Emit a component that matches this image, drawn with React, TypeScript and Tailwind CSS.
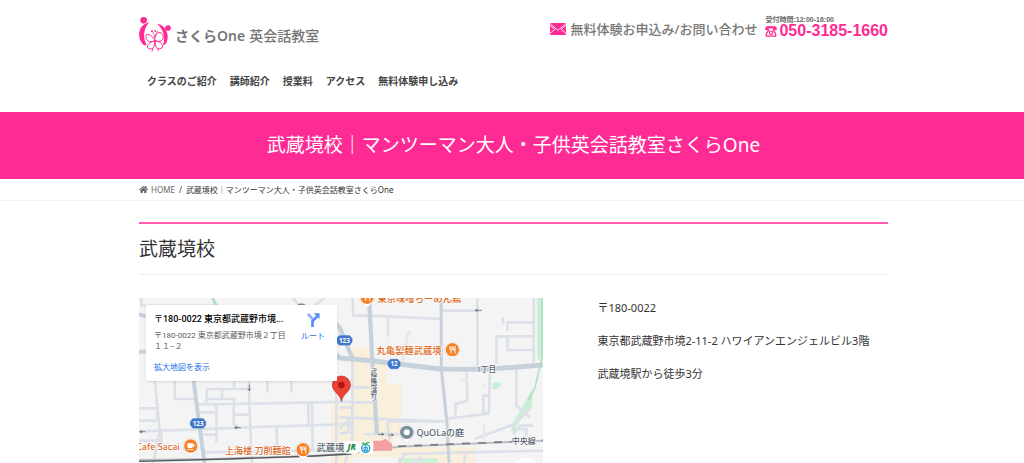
import { FaHome } from "react-icons/fa";

const navItems = [
  { label: "クラスのご紹介", href: "#class" },
  { label: "講師紹介", href: "#teacher" },
  { label: "授業料", href: "#price" },
  { label: "アクセス", href: "#access" },
  { label: "無料体験申し込み", href: "#trial" },
];

const address = ["〒180-0022", "東京都武蔵野市境2-11-2 ハワイアンエンジェルビル3階", "武蔵境駅から徒歩3分"];

function LogoMark() {
  return (
    <svg viewBox="24 33 99 108" className="h-9 w-[33px] shrink-0" fill="none" aria-hidden="true">
      <circle cx="38" cy="46" r="10" fill="#ff2b95" />
      <circle cx="111" cy="69" r="8.5" fill="#ff2b95" />
      <path d="M55 52C22 58 15 98 37 119C42 123 47 122 46 117C35 100 37 70 55 52Z" fill="#ff2b95" />
      <path d="M78 56C103 59 117 88 107 112C104 119 98 122 96 119C104 97 98 73 78 56Z" fill="#ff2b95" />
      <g stroke="#ff2b95" strokeWidth="3" strokeLinejoin="round" strokeLinecap="round">
        <path d="M72 107C66 96 58 86 46 89C42 99 48 110 60 110Q67 111 72 107Z" />
        <path d="M72 107C70 96 74 84 87 82C99 88 100 102 90 108Q80 112 72 107Z" />
        <path d="M72 107C62 110 49 115 49 127C54 134 66 133 69 125Q72 116 72 107Z" />
        <path d="M72 107C82 109 97 114 95 126C90 134 78 132 75 125Q72 116 72 107Z" />
        <path d="M66 131L63 138M79 131L82 137" />
        <path d="M71 97C70 88 68 84 64 80M74 95C75 86 77 83 80 79" strokeWidth="2.4" />
      </g>
      <circle cx="63" cy="79" r="3" fill="#ff2b95" />
      <circle cx="73" cy="78" r="3" fill="#ff2b95" />
    </svg>
  );
}

function MailIcon() {
  return (
    <svg viewBox="0 0 48 36" className="h-3 w-4 shrink-0" aria-hidden="true">
      <rect width="48" height="36" rx="2" fill="#ff2b95" />
      <path d="M0 7L15 19L0 31M48 7L33 19L48 31M0 2L24 22L48 2" fill="none" stroke="#fff" strokeWidth="2.5" />
    </svg>
  );
}

function PhoneIcon() {
  return (
    <svg viewBox="0 0 36 33" className="h-[11px] w-3 shrink-0" fill="none" stroke="#ff2b95" aria-hidden="true">
      <path d="M1 12V7Q2 1 9 1H27Q34 1 35 7V12H25V7H11V12Z" fill="#ff2b95" strokeWidth="1" />
      <path d="M12 11L4 24V30.5H32V24L24 11" strokeWidth="4" />
      <circle cx="18" cy="20" r="5" strokeWidth="3.5" />
    </svg>
  );
}

function Header() {
  return (
    <header className="pl-[3px]">
      <div className="mx-auto max-w-[749px] pt-4 pb-[21px]">
        <div className="flex items-start justify-between">
          <a href="#home" className="flex items-center gap-[3px] text-[#777]">
            <LogoMark />
            <span className="flex items-center gap-1 pt-1 leading-5">
              <span className="text-[14px] font-semibold">さくらOne</span>
              <span className="text-[14px] font-medium">英会話教室</span>
            </span>
          </a>
          <div className="flex items-start gap-2">
            <a href="#contact" className="flex items-center gap-1 pt-[3px] text-[13px] leading-5 font-medium text-[#777]">
              <MailIcon />
              無料体験お申込み/お問い合わせ
            </a>
            <a href="tel:050-3185-1660" className="flex flex-col font-['Liberation_Sans','Noto_Sans_CJK_JP',sans-serif] font-bold">
              <span className="text-[7px] leading-[7px] text-[#666]">受付時間:12:00-16:00</span>
              <span className="flex items-center gap-[2px] text-[16px] leading-4 text-[#ff2b95]">
                <PhoneIcon />
                050-3185-1660
              </span>
            </a>
          </div>
        </div>
        <nav className="mt-[19px] flex gap-[13px] px-2 text-[10px] leading-5 font-bold text-[#444]">
          {navItems.map(({ label, href }) => (
            <a key={href} href={href}>
              {label}
            </a>
          ))}
        </nav>
      </div>
    </header>
  );
}

function Pin({ x, y, kind }: { x: number; y: number; kind: "food" | "cafe" | "place" }) {
  const color = kind === "place" ? "#78909c" : "#f8822a";
  return (
    <g transform={`translate(${x} ${y})`}>
      <path d="M0 32L-15 17A23 23 0 1 1 15 17Z" fill="#fff" stroke="#c9cdd2" strokeWidth="1.5" />
      <circle r="20" fill={color} />
      {kind === "place" && <circle r="9" fill="#fff" />}
      {kind === "food" && (
        <path d="M-8 -10V-3Q-8 1 -4 1V11M-4 -10V0M0 -10V-3Q0 1 -4 1M8 11V-10Q3 -8 3 1H8" fill="none" stroke="#fff" strokeWidth="2.8" />
      )}
      {kind === "cafe" && (
        <path d="M-10 -8H6V2Q6 6 2 6H-6Q-10 6 -10 2ZM-10 9H8V11H-10ZM6 -6H11V2H6" fill="#fff" />
      )}
    </g>
  );
}

function Shield({ x, y, label }: { x: number; y: number; label: string }) {
  const w = label.length > 2 ? 23 : 18;
  return (
    <g transform={`translate(${x} ${y})`}>
      <path d={`M${-w + 7} -14H${w - 7}L${w} -5V5L${w - 7} 14H${-w + 7}L${-w} 5V-5Z`} fill="#3f78c9" stroke="#3f78c9" strokeWidth="2" strokeLinejoin="round" />
      <text y="7" textAnchor="middle" fontSize="19" fontWeight="700" fill="#fff">
        {label}
      </text>
    </g>
  );
}

function MapDrawing() {
  return (
    <svg viewBox="12 22 1215 498" preserveAspectRatio="xMidYMid slice" className="block h-full w-full bg-[#f4f4f5]" role="img" aria-label="武蔵境校の地図">
      {/* areas */}
      <path d="M655 165L712 175L722 210H755V280H800V410L770 470H1020V520H850V500H600V345H652Z" fill="#f9efdb" />
      <path d="M590 340H655V520H590Z" fill="#f9efdb" />
      <path d="M1207 22H1227V200L1218 215L1207 200Z" fill="#c9f0d6" />
      <path d="M1195 290L1192 350L1145 405L1130 430V402L1165 345Z" fill="#c9f0d6" />
      <path d="M1075 275H1097V290H1088V295H1072Z" fill="#c3efd3" />
      <path d="M790 502H910V520H790Z" fill="#cdf0d8" />
      {/* small streets */}
      <g fill="none" stroke="#dce1e9" strokeWidth="8" strokeLinejoin="round">
        <path d="M60 270L75 420L55 520M12 353H66L70 390M12 390H72" />
        <path d="M120 270V325H185M217 292L214 342M217 295H345M262 322V292M214 325H298V342M298 268V292M342 270L346 400L352 520M398 270V306M470 270V306" />
        <path d="M185 342L655 333M245 342V455M190 365H245M297 342V400L310 410M297 372H344M520 334L522 410M532 334L534 480M605 270V520M425 408L428 480" />
        <path d="M12 422L345 410L650 400M12 450H80M80 422V470M200 432H245M200 485L640 478" />
        <path d="M20 22V45H250M475 22L490 40M570 22L540 45" />
        <path d="M653 22L656 75H705L920 85M760 85V138M653 205V440L630 520M653 290H705M653 335H725M615 380L918 392M757 392L765 460M757 392H930M735 430H765M930 385L1065 368M1065 250L1063 365L1046 370V315H1060M995 235L998 330L962 340V375" />
        <path d="M920 60H1030M1028 22V230M1197 22V222M1118 95H1197M1118 95V120M1085 137H1197M1118 137V178H1197M1085 137V220M1105 80V100M1145 235V345L1185 380M1135 430L1155 405H1195M1140 430V415H1175V440M1020 445L1140 400L1185 355" />
        <path d="M615 430L635 425H655L640 385V430M615 350H650M615 415L640 390M690 430H815M800 490L1227 480M990 492V520M810 490L790 520M860 500L830 520" />
        <path d="M1048 400V450M820 130L828 122M803 218L820 128M1046 280V290M975 267H1000" stroke="#e6e8ec" />
      </g>
      {/* main roads */}
      <g fill="none" stroke="#c7d1dc" strokeWidth="15" strokeLinejoin="round">
        <path d="M12 183H33M12 70L33 78M176 265L190 375L210 520" strokeWidth="12" />
        <path d="M605 192L615 202L710 210L915 235L1055 236L1227 223" />
        <path d="M570 70L615 110L655 208M703 22L713 215L727 430" strokeWidth="13" />
        <path d="M919 22L920 235L937 400L943 520" strokeWidth="9" />
      </g>
      <path d="M233 22L245 45" stroke="#a8dfbe" strokeWidth="8" />
      <path d="M1222 22V200L1200 295L1180 330" fill="none" stroke="#a8dfbe" strokeWidth="4" />
      {/* railway */}
      <path d="M12 508L240 505L540 495L650 488L790 468L1227 450" fill="none" stroke="#b9bdc4" strokeWidth="6" />
      <path d="M12 512L280 505L540 496L650 490" fill="none" stroke="#55585c" strokeWidth="4" />
      <path d="M790 467L1227 449" fill="none" stroke="#777b80" strokeWidth="5" strokeDasharray="24 24" />
      <path d="M716 450H740L752 444L772 460V480H716Z" fill="#f4a0a0" />
      {/* one-way arrows */}
      <g stroke="#666a70" strokeWidth="2.5" fill="none">
        <path d="M344 282V300M340 294L344 300L348 294M300 411H318M307 407L300 411L307 415M15 423H32M22 419L15 423L22 427M1022 59H1042M1029 55L1022 59L1029 63M730 431H747M741 427L747 431L741 435M760 433H776M770 429L776 433L770 437" />
      </g>
      {/* labels */}
      <g stroke="#fff" strokeWidth="4" paintOrder="stroke" strokeLinejoin="round" fontSize="27" fontWeight="500">
        <g fill="#dc6a1e">
          <text x="728" y="34" fontSize="28">東京味噌らーめん鶏</text>
          <text x="725" y="190" fontSize="28">丸亀製麺武蔵境</text>
          <text x="4" y="479">Cafe Sacai</text>
          <text x="271" y="489" fontSize="27">上海楼 刀削麺館</text>
        </g>
        <g fill="#53606c">
          <text x="845" y="437">QuOLaの庭</text>
          <text x="545" y="480" fontSize="28">武蔵境</text>
          <text x="1025" y="244" fontSize="23">1丁目</text>
          <text x="1131" y="461" fontSize="24">中央線</text>
          <text x="716" y="232" fontSize="20" style={{ writingMode: "vertical-rl" }}>
            武蔵境通り
          </text>
        </g>
      </g>
      <Pin x={697} y={20} kind="food" />
      <Pin x={953} y={177} kind="food" />
      <Pin x={168} y={466} kind="cafe" />
      <Pin x={505} y={477} kind="food" />
      <Pin x={816} y={425} kind="place" />
      <path d="M484 46A20 20 0 0 1 516 46Z" fill="#78909c" />
      <Shield x={190} y={398} label="123" />
      <Shield x={629} y={149} label="123" />
      <Shield x={778} y={220} label="12" />
      {/* station badges */}
      <rect x="630" y="451" width="42" height="38" rx="9" fill="#fff" />
      <rect x="673" y="451" width="42" height="38" rx="9" fill="#fff" />
      <text x="651" y="479" textAnchor="middle" fontSize="25" fontWeight="800" fontStyle="italic" fill="#168a45">
        JR
      </text>
      <g fill="none" stroke="#2398d5" strokeWidth="4">
        <circle cx="693" cy="473" r="12" />
        <path d="M693 464V482M688 470H698V480H688Z" strokeWidth="3" />
        <path d="M681 459Q690 455 693 463Q696 452 705 456" stroke="#4db35e" />
      </g>
      {/* school marker */}
      <path d="M620 332C616 309 593 304 593 283A27 27 0 0 1 647 283C647 304 624 309 620 332Z" fill="#ea4335" stroke="#c5221f" strokeWidth="2" />
      <circle cx="620" cy="283" r="10" fill="#b31412" />
      <circle cx="1172" cy="540" r="38" fill="#fff" />
    </svg>
  );
}

function MapCard() {
  return (
    <div className="absolute top-[7px] left-[7px] flex h-[76px] w-[191px] justify-between rounded-[1px] bg-white pt-2 pr-3 pl-2 font-['Roboto','Noto_Sans_CJK_JP',sans-serif] text-[8px] leading-[11px] shadow">
      <div>
        <p className="text-[9px] leading-3 font-medium text-black">〒180-0022 東京都武蔵野市境...</p>
        <p className="mt-[5px] text-[#5b5b5b]">
          〒180-0022 東京都武蔵野市境２丁目
          <br />
          １１−２
        </p>
        <a href="#map" className="mt-[10px] block text-[#1a73e8]">
          拡大地図を表示
        </a>
      </div>
      <a href="#route" className="flex flex-col items-center gap-1 text-[#1a73e8]">
        <svg viewBox="0 0 38 42" className="h-[14px] w-[13px]" fill="none" aria-hidden="true">
          <path d="M2 3L16 18" stroke="#8ab4f8" strokeWidth="8" />
          <path d="M16 42V24L30 10" stroke="#4f8df6" strokeWidth="8" />
          <path d="M20 1H37V18Z" fill="#4f8df6" />
        </svg>
        ルート
      </a>
    </div>
  );
}

export default function App() {
  return (
    <div className="overflow-hidden bg-white font-['Noto_Sans','Noto_Sans_CJK_JP',sans-serif] text-[#333]">
      <Header />
      <div className="bg-[#ff2b95] py-5 pl-[3px] text-center text-white">
        <h1 className="text-[19px] leading-[27px]">武蔵境校｜マンツーマン大人・子供英会話教室さくらOne</h1>
      </div>
      <div className="border-b border-[#f0f0f0] pl-[3px]">
        <nav className="mx-auto flex max-w-[749px] items-center gap-1 text-[8px] leading-[21px]">
          <a href="#home" className="flex items-center gap-[3px] text-[#666]">
            <FaHome className="h-[9px] w-[9px]" />
            HOME
          </a>
          <span>/</span>
          <span>武蔵境校｜マンツーマン大人・子供英会話教室さくらOne</span>
        </nav>
      </div>
      <main className="pl-[3px]">
        <div className="mx-auto max-w-[749px] pt-[21px]">
          <h2 className="border-t-2 border-b border-t-[#ff5cb0] border-b-[#eee] py-3 text-[19px] leading-[26px]">武蔵境校</h2>
          <div className="mt-[23px] flex">
            <div className="relative h-[166px] w-[54%]">
              <MapDrawing />
              <MapCard />
            </div>
            <div className="ml-[54px] flex flex-1 flex-col gap-[13px] text-[11px] leading-5">
              {address.map((line) => (
                <p key={line}>{line}</p>
              ))}
            </div>
          </div>
        </div>
      </main>
    </div>
  );
}
